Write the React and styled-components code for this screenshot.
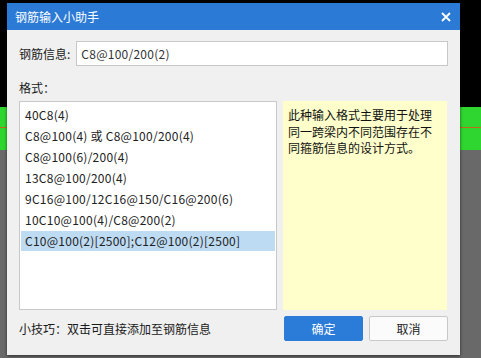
import React from "react";
import styled, { createGlobalStyle } from "styled-components";

const GlobalStyle = createGlobalStyle`
    html, body {
        margin: 0;
        padding: 0;
        width: 481px;
        height: 358px;
        overflow: hidden;
    }
    body {
        font-family: "Noto Sans CJK SC", "Noto Sans", sans-serif;
        background: linear-gradient(
            to bottom,
            #000 0px,
            #000 107px,
            #2fd62f 107px,
            #2fd62f 127px,
            #c06a1a 127px,
            #c06a1a 128px,
            #2fd62f 128px,
            #2fd62f 150px,
            #696969 150px,
            #696969 100%
        );
    }
`;

const Dialog = styled.div`
    width: 453px;
    height: 352px;
    margin: 3px 0 0 7px;
    background: #f0f0f0;
    box-shadow: 0 1px 3px rgba(0, 0, 0, 0.6);
    display: flex;
    flex-direction: column;
    box-sizing: border-box;
`;

const TitleBar = styled.div`
    height: 27px;
    background: #2b7bd6;
    color: #fff;
    font-size: 12px;
    display: flex;
    align-items: center;
    justify-content: space-between;
    padding: 0 9px 0 8px;
`;

const Body = styled.div`
    flex: 1;
    padding: 11px 12px 0 12px;
    display: flex;
    flex-direction: column;
    font-size: 12px;
    color: #1a1a1a;
`;

const FieldRow = styled.div`
    display: flex;
    align-items: center;
    gap: 6px;
`;

const Input = styled.div`
    flex: 1;
    height: 25px;
    box-sizing: border-box;
    border: 1px solid #c8c8c8;
    background: #fff;
    padding: 0 4px;
    display: flex;
    align-items: center;
    color: #333;
    letter-spacing: 0.25px;
`;

const SectionLabel = styled.div`
    margin-top: 13px;
    height: 18px;
    line-height: 18px;
`;

const Panels = styled.div`
    margin-top: 4px;
    display: grid;
    grid-template-columns: 258px 164px;
    gap: 6px;
    height: 209px;
`;

const List = styled.div`
    background: #fff;
    border: 1px solid #c8c8c8;
    padding: 3px 1px;
    box-sizing: border-box;
`;

const Item = styled.div`
    height: 20px;
    margin-bottom: 1px;
    line-height: 20px;
    padding: 0 4px;
    white-space: nowrap;
    letter-spacing: 0.25px;
    color: #222;
    background: ${(p) => (p.$selected ? "#bedbf4" : "transparent")};
`;

const Hint = styled.div`
    background: #ffffcc;
    padding: 6px 10px 4px 5px;
    line-height: 16.5px;
    color: #111;
`;

const Footer = styled.div`
    margin-top: 6px;
    display: flex;
    align-items: center;
    justify-content: space-between;
`;

const Buttons = styled.div`
    display: flex;
    gap: 6px;
`;

const Button = styled.div`
    width: 79px;
    height: 25px;
    box-sizing: border-box;
    border-radius: 2px;
    display: flex;
    align-items: center;
    justify-content: center;
    font-size: 12px;
    background: ${(p) => (p.$primary ? "#2b7bd8" : "#fbfbfb")};
    color: ${(p) => (p.$primary ? "#fff" : "#222")};
    border: 1px solid ${(p) => (p.$primary ? "#2b7bd8" : "#c8c8c8")};
`;

const items = [
    "40C8(4)",
    "C8@100(4) 或 C8@100/200(4)",
    "C8@100(6)/200(4)",
    "13C8@100/200(4)",
    "9C16@100/12C16@150/C16@200(6)",
    "10C10@100(4)/C8@200(2)",
    "C10@100(2)[2500];C12@100(2)[2500]",
];

const CloseIcon = () => (
    <svg width="10" height="10" viewBox="0 0 10 10">
        <path d="M1 1L9 9M9 1L1 9" stroke="#fff" strokeWidth="1.8" />
    </svg>
);

const App = () => (
    <>
        <GlobalStyle />
        <Dialog>
            <TitleBar>
                <span>钢筋输入小助手</span>
                <CloseIcon />
            </TitleBar>
            <Body>
                <FieldRow>
                    <span>钢筋信息:</span>
                    <Input>C8@100/200(2)</Input>
                </FieldRow>
                <SectionLabel>格式：</SectionLabel>
                <Panels>
                    <List>
                        {items.map((t, i) => (
                            <Item key={t} $selected={i === items.length - 1}>
                                {t}
                            </Item>
                        ))}
                    </List>
                    <Hint>
                        此种输入格式主要用于处理同一跨梁内不同范围存在不同箍筋信息的设计方式。
                    </Hint>
                </Panels>
                <Footer>
                    <span>小技巧：双击可直接添加至钢筋信息</span>
                    <Buttons>
                        <Button $primary>确定</Button>
                        <Button>取消</Button>
                    </Buttons>
                </Footer>
            </Body>
        </Dialog>
    </>
);

export default App;
